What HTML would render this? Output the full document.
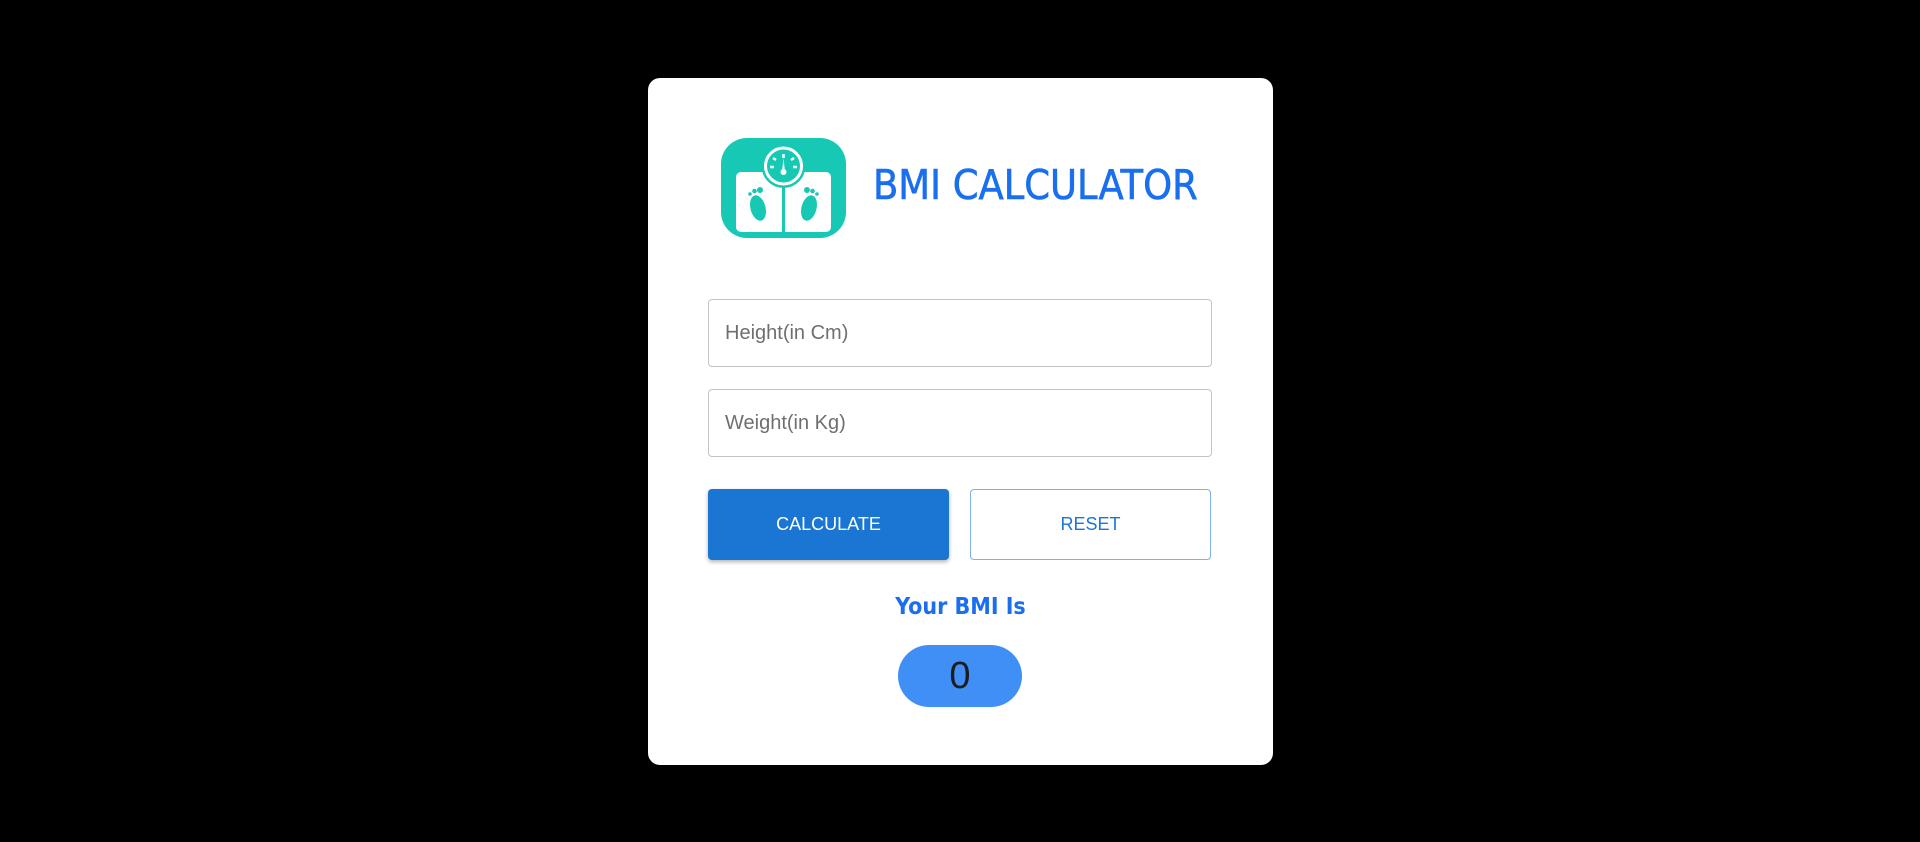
<!DOCTYPE html>
<html><head><style>
body{margin:0;width:1920px;height:842px;background:#000;font-family:"Liberation Sans",sans-serif;position:relative;overflow:hidden}
.card{position:absolute;left:648px;top:78px;width:625px;height:687px;background:#fff;border-radius:12px}
.abs{position:absolute}
.inp{left:60px;width:502px;height:66px;border:1px solid #c4c4c4;border-radius:4px;box-sizing:content-box}
.inp span{position:absolute;left:16px;top:22px;font-size:20px;color:#6f6f6f}
.btn{top:411px;height:71px;width:241px;border-radius:4px;box-sizing:border-box;font-size:18px;display:flex;align-items:center;justify-content:center}
</style></head><body>
<div class="card">
 <svg class="abs" style="left:73px;top:60px" width="125" height="100" viewBox="0 0 125 100">
  <rect width="125" height="100" rx="26" fill="#17c9b4"/>
  <rect x="15" y="34" width="95" height="60" rx="5" fill="#fff"/>
  <line x1="62.5" y1="40" x2="62.5" y2="94" stroke="#17c9b4" stroke-width="3"/>
  <circle cx="62.5" cy="28" r="22" fill="#17c9b4"/>
  <circle cx="62.5" cy="28" r="18" fill="none" stroke="#fff" stroke-width="3"/>
  <g stroke="#fff" stroke-width="2.5"><line x1="62.5" y1="16" x2="62.5" y2="20"/><line x1="52" y1="20" x2="55" y2="22"/><line x1="73" y1="20" x2="70" y2="22"/><line x1="49" y1="29" x2="53" y2="29"/><line x1="76" y1="29" x2="72" y2="29"/></g>
  <path d="M61 34 L62.5 20 L64 34Z" fill="#fff"/><circle cx="62.5" cy="34" r="3" fill="#fff"/>
  <ellipse cx="37" cy="70" rx="7.5" ry="13" fill="#17c9b4" transform="rotate(-15 37 70)"/>
  <ellipse cx="88" cy="70" rx="7.5" ry="13" fill="#17c9b4" transform="rotate(15 88 70)"/>
  <g fill="#17c9b4"><circle cx="39" cy="52" r="3"/><circle cx="33.5" cy="53" r="2.3"/><circle cx="29" cy="56" r="1.8"/><circle cx="86" cy="52" r="3"/><circle cx="91.5" cy="53" r="2.3"/><circle cx="96" cy="56" r="1.8"/></g>
 </svg>
 <div class="abs" style="left:225px;top:83px;font-size:41px;font-weight:normal;color:#1a6fef;font-family:'DejaVu Sans Condensed','Liberation Sans',sans-serif;-webkit-text-stroke:0.6px #1a6fef">BMI CALCULATOR</div>
 <div class="abs inp" style="top:221px"><span>Height(in Cm)</span></div>
 <div class="abs inp" style="top:311px"><span>Weight(in Kg)</span></div>
 <div class="abs btn" style="left:60px;background:#1a76d2;color:#fff;box-shadow:0 2px 4px rgba(0,0,0,.3)">CALCULATE</div>
 <div class="abs btn" style="left:322px;border:1px solid #7fb1e6;color:#1a76d2">RESET</div>
 <div class="abs" style="left:0;width:625px;top:516px;text-align:center;font-size:23px;font-weight:bold;color:#1a6fef;font-family:'DejaVu Sans Condensed','Liberation Sans',sans-serif">Your BMI Is</div>
 <div class="abs" style="left:250px;top:567px;width:124px;height:62px;border-radius:31px;background:#3f8ff7;color:#1c1c1c;font-size:38px;text-align:center;line-height:62px">0</div>
</div>
</body></html>
